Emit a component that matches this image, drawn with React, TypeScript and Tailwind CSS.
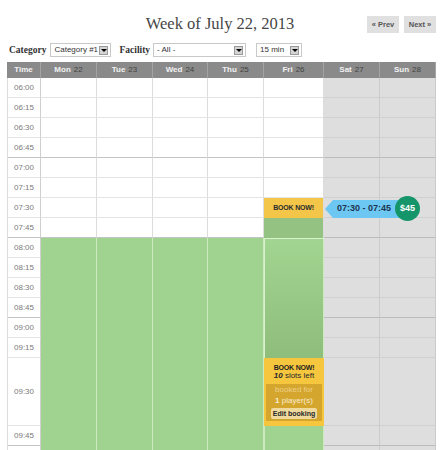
import React from "react";

const times = [
  "06:00", "06:15", "06:30", "06:45", "07:00", "07:15", "07:30", "07:45",
  "08:00", "08:15", "08:30", "08:45", "09:00", "09:15", "09:30", "09:45", "",
];

const days = [
  { name: "Mon", num: "22", w: "w-[56px]" },
  { name: "Tue", num: "23", w: "w-[56px]" },
  { name: "Wed", num: "24", w: "w-[55px]" },
  { name: "Thu", num: "25", w: "w-[56px]" },
  { name: "Fri", num: "26", w: "w-[60px]" },
  { name: "Sat", num: "27", w: "w-[56px]" },
  { name: "Sun", num: "28", w: "w-[56px]" },
];

const rowH = (t: string) => (t === "09:30" ? "h-[68px]" : "h-5");
const hourLine = (t: string) => t.endsWith(":45");

function Select({ label, w }: { label: string; w: string }) {
  return (
    <div className={`${w} h-[14px] flex items-center justify-between border border-[#c9c9c9] bg-white pl-[3px] pr-[2px] overflow-hidden`}>
      <span className="text-[8px] text-[#333] leading-none whitespace-nowrap">{label}</span>
      <span className="shrink-0 w-[9px] h-[9px] bg-[#d4d4d4] border border-[#9a9a9a] flex items-center justify-center">
        <span className="w-0 h-0 border-l-[3px] border-r-[3px] border-t-[3px] border-l-transparent border-r-transparent border-t-black" />
      </span>
    </div>
  );
}

function HeaderCell({ name, num, w }: { name: string; num: string; w: string }) {
  return (
    <div className={`${w} h-4 bg-[#8a8a8a] border-r border-[#a3a3a3] flex items-center justify-center gap-[3px] text-[8px]`}>
      <span className="font-bold text-[#f2f2f2]">{name}</span>
      <span className="text-[#444]">{num}</span>
    </div>
  );
}

function WhiteCell({ t }: { t: string }) {
  return (
    <div className={`${rowH(t)} bg-white border-r border-[#dcdcdc] border-b ${hourLine(t) ? "border-b-[#c4c4c4]" : "border-b-[#e4e4e4]"}`} />
  );
}

function WeekdayColumn({ w }: { w: string }) {
  return (
    <div className={`${w} flex flex-col`}>
      {times.slice(0, 8).map((t) => (
        <WhiteCell key={t} t={t} />
      ))}
      <div className="flex-1 bg-[#a0d38f] border-r border-[#cdeabf]" />
    </div>
  );
}

function FridayColumn() {
  return (
    <div className="w-[60px] flex flex-col">
      {times.slice(0, 6).map((t) => (
        <WhiteCell key={t} t={t} />
      ))}
      <div className="h-5 bg-[#f3c64a] flex items-center justify-center border-r border-[#dcdcdc]">
        <span className="text-[7px] font-bold text-[#2b2b2b] tracking-[-0.2px]">BOOK NOW!</span>
      </div>
      <div className="h-5 bg-[#94c283] border-r border-[#dcdcdc]" />
      <div className="h-[120px] bg-gradient-to-b from-[#a2d591] to-[#8fbd7c] border-t border-[#d8f0cc] border-l border-l-[#d8f0cc] border-r border-r-[#cdeabf]" />
      <div className="h-[68px] bg-[#f5c63e] px-[2px] pt-[2px] pb-[5px] flex flex-col">
        <div className="h-[24px] flex flex-col items-center justify-center gap-[1px] leading-none">
          <span className="text-[7px] font-bold text-[#1f1f1f] tracking-[-0.2px]">BOOK NOW!</span>
          <span className="text-[8px] text-[#2a2a2a]">
            <b className="italic">10</b> slots left
          </span>
        </div>
        <div className="flex-1 bg-[#d5a62d] flex flex-col items-center justify-center leading-none gap-[3px]">
          <span className="text-[8px] text-[#eed08a]">booked for</span>
          <span className="text-[8px] text-[#f8ecd0]">
            <b>1</b> player(s)
          </span>
          <span className="text-[7px] font-bold text-[#262626] bg-[#efd99d] rounded-[2px] px-[2px] py-[2px]">Edit booking</span>
        </div>
      </div>
      <div className="flex-1 bg-[#a0d38f] border-r border-[#cdeabf] border-l border-l-[#cdeabf]" />
    </div>
  );
}

function WeekendColumn({ w }: { w: string }) {
  return (
    <div className={`${w} flex flex-col`}>
      {times.map((t, i) => (
        <div
          key={i}
          className={`${rowH(t)} bg-[#dedede] border-r border-[#cbcbcb] border-b ${hourLine(t) ? "border-b-[#bcbcbc]" : "border-b-[#d0d0d0]"}`}
        />
      ))}
    </div>
  );
}

export default function App() {
  return (
    <div className="relative w-[440px] h-[450px] overflow-hidden bg-white font-['Liberation_Sans',Arial,sans-serif]">
      {/* title bar */}
      <div className="grid grid-cols-[1fr_auto_1fr] items-center pt-[11px] h-[38px]">
        <div />
        <h1 className="font-['Liberation_Serif','Times_New_Roman',serif] text-[16.5px] text-[#464646] leading-none">
          Week of July 22, 2013
        </h1>
        <div className="flex justify-end gap-[5px] pr-[4px]">
          <button className="w-[32px] h-[17px] bg-[#e0e0e0] text-[7.5px] font-bold text-[#555]">« Prev</button>
          <button className="w-[32px] h-[17px] bg-[#e0e0e0] text-[7.5px] font-bold text-[#555]">Next »</button>
        </div>
      </div>

      {/* filters */}
      <div className="flex items-center h-[24px] pl-[9px]">
        <span className="font-['Liberation_Serif',serif] font-bold text-[9.5px] text-[#333] mr-[4px]">Category</span>
        <Select label="Category #1" w="w-[61px]" />
        <span className="font-['Liberation_Serif',serif] font-bold text-[9.5px] text-[#333] ml-[8px] mr-[3px]">Facility</span>
        <Select label="- All -" w="w-[93px]" />
        <div className="ml-[10px]">
          <Select label="15 min" w="w-[46px]" />
        </div>
      </div>

      {/* calendar grid */}
      <div className="ml-[7px] w-[429px] flex flex-col">
        <div className="flex">
          <div className="w-[34px] h-4 bg-[#8a8a8a] border-r border-[#a3a3a3] flex items-center justify-center text-[8px] font-bold text-[#f2f2f2]">
            Time
          </div>
          {days.map((d) => (
            <HeaderCell key={d.name} {...d} />
          ))}
        </div>
        <div className="flex h-[400px]">
          <div className="w-[34px] flex flex-col border-l border-[#dcdcdc]">
            {times.map((t, i) => (
              <div
                key={i}
                className={`${rowH(t)} flex items-center justify-center text-[8px] text-[#7a7a7a] border-r border-[#cfcfcf] border-b ${hourLine(t) ? "border-b-[#c4c4c4]" : "border-b-[#e4e4e4]"}`}
              >
                {t}
              </div>
            ))}
          </div>
          <WeekdayColumn w="w-[56px]" />
          <WeekdayColumn w="w-[56px]" />
          <WeekdayColumn w="w-[55px]" />
          <WeekdayColumn w="w-[56px]" />
          <FridayColumn />
          <WeekendColumn w="w-[56px]" />
          <WeekendColumn w="w-[56px]" />
        </div>
      </div>

      {/* time tooltip */}
      <div className="absolute left-[325px] top-[199px] flex items-center">
        <svg width="78" height="20" viewBox="0 0 78 20" className="block">
          <polygon points="0,10 8,1 78,1 78,19 8,19" fill="#6cc7f2" />
        </svg>
        <span className="absolute left-[12px] top-[5px] text-[9px] font-bold text-[#1d3652] leading-none whitespace-nowrap">
          07:30 - 07:45
        </span>
        <div className="absolute left-[70px] top-[-3px] w-[25px] h-[25px] rounded-full bg-[#15966a] flex items-center justify-center text-[9px] font-bold text-white">
          $45
        </div>
      </div>
    </div>
  );
}
